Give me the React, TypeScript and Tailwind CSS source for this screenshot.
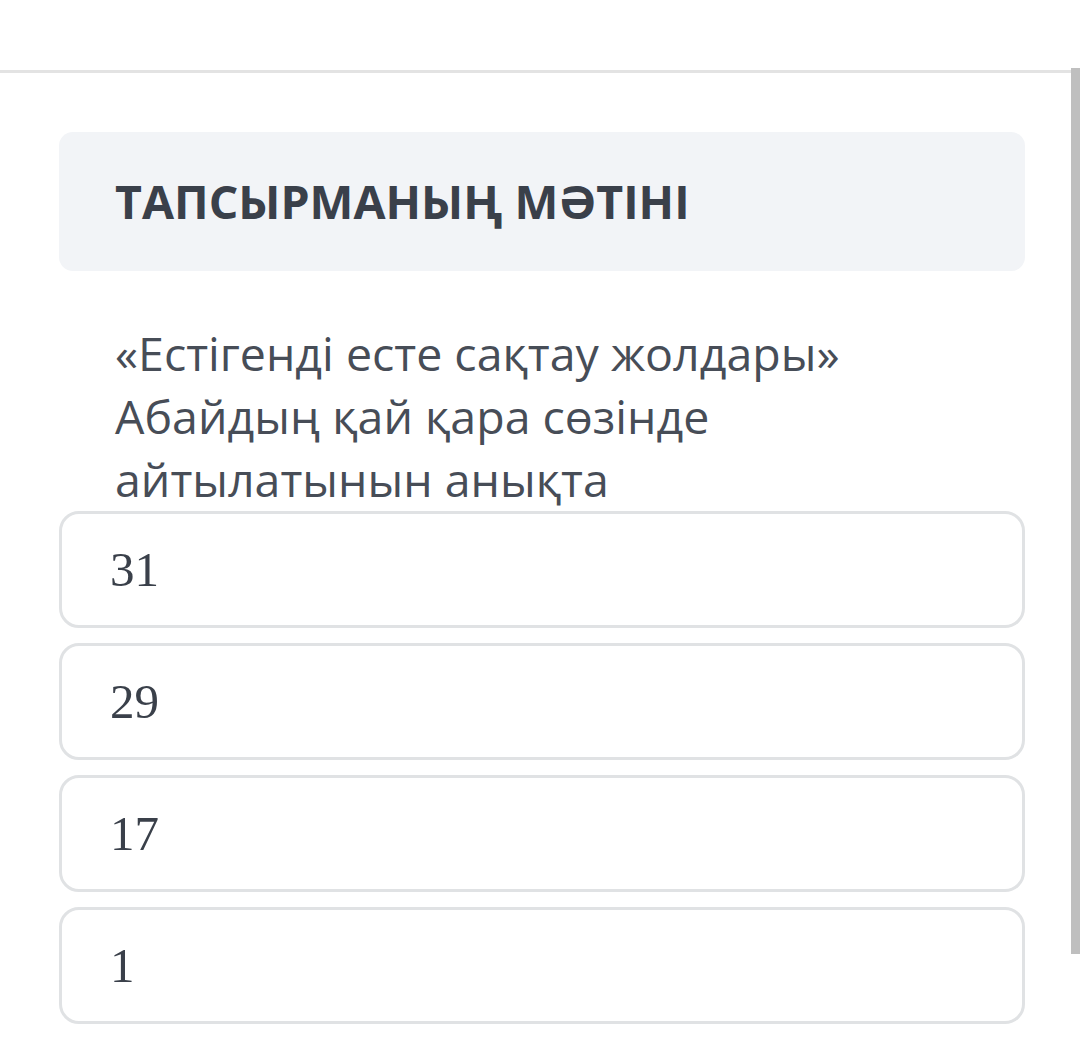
const OPTIONS = ["31", "29", "17", "1"];

export default function App() {
  return (
    <div className="relative w-[1080px] h-[1057px] bg-white overflow-hidden font-['Open_Sans',sans-serif]">
      {/* top bar */}
      <div className="h-[70px]" />
      <div className="h-[3px] w-[1071px] bg-[#e3e3e3]" />

      <div className="pl-[59px] pr-[55px] pt-[59px]">
        {/* header */}
        <div className="h-[139px] rounded-[14px] bg-[#f2f4f7] px-[56px] flex items-center">
          <h1 className="text-[46.5px] font-bold text-[#3a404a] leading-none">ТАПСЫРМАНЫҢ МӘТІНІ</h1>
        </div>

        {/* question */}
        <p className="mt-[51px] px-[56px] text-[46.5px] leading-[63px] text-[#474d57]">
          «Естігенді есте сақтау жолдары» Абайдың қай қара сөзінде айтылатынын анықта
        </p>

        {/* options */}
        <div className="flex flex-col gap-[15px]">
          {OPTIONS.map(o => (
            <div key={o}
              className="h-[117px] rounded-[20px] border-[3px] border-[#e0e2e4] pl-[48px] flex items-center">
              <span className="font-['Liberation_Serif',serif] text-[49px] text-[#3a404a] leading-none">{o}</span>
            </div>
          ))}
        </div>
      </div>

      {/* scrollbar */}
      <div className="absolute right-0 top-[68px] w-[9px] h-[886px] bg-[#bfbfbf]" />
    </div>
  );
}
